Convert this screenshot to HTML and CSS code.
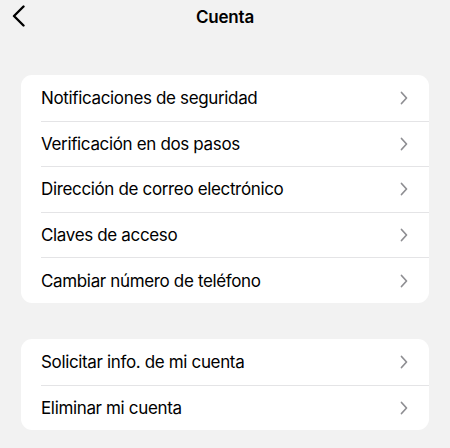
FILE: index.html
```html
<!DOCTYPE html>
<html lang="es">
<head>
    <meta charset="UTF-8">
    <meta name="viewport" content="width=device-width, initial-scale=1.0">
    <title>Cuenta</title>
    <link rel="stylesheet" href="styles.css">
</head>
<body>

    <header class="topbar">
        <a class="back" href="#">
            <svg width="14" height="22" viewBox="0 0 14 22">
                <path d="M11.5 1.5 L2 11 L11.5 20.5" fill="none" stroke="#000" stroke-width="2.4" stroke-linecap="round" stroke-linejoin="round"/>
            </svg>
        </a>
        <h1>Cuenta</h1>
    </header>

    <ul class="group">
        <li><span>Notificaciones de seguridad</span><svg class="chev" viewBox="0 0 8 14"><path d="M1.5 1.5 L6.5 7 L1.5 12.5"/></svg></li>
        <li><span>Verificación en dos pasos</span><svg class="chev" viewBox="0 0 8 14"><path d="M1.5 1.5 L6.5 7 L1.5 12.5"/></svg></li>
        <li><span>Dirección de correo electrónico</span><svg class="chev" viewBox="0 0 8 14"><path d="M1.5 1.5 L6.5 7 L1.5 12.5"/></svg></li>
        <li><span>Claves de acceso</span><svg class="chev" viewBox="0 0 8 14"><path d="M1.5 1.5 L6.5 7 L1.5 12.5"/></svg></li>
        <li><span>Cambiar número de teléfono</span><svg class="chev" viewBox="0 0 8 14"><path d="M1.5 1.5 L6.5 7 L1.5 12.5"/></svg></li>
    </ul>

    <ul class="group">
        <li><span>Solicitar info. de mi cuenta</span><svg class="chev" viewBox="0 0 8 14"><path d="M1.5 1.5 L6.5 7 L1.5 12.5"/></svg></li>
        <li><span>Eliminar mi cuenta</span><svg class="chev" viewBox="0 0 8 14"><path d="M1.5 1.5 L6.5 7 L1.5 12.5"/></svg></li>
    </ul>

</body>
</html>
```

FILE: styles.css
```css
body {
    margin: 0;
    background: #f2f2f2;
    font-family: Inter, "Noto Sans", sans-serif;
    color: #000;
}

.topbar {
    position: relative;
    height: 34px;
    display: flex;
    justify-content: center;
    align-items: center;
}

.topbar h1 {
    margin: 0;
    font-size: 17px;
    font-weight: 600;
    letter-spacing: -0.2px;
}

.back {
    position: absolute;
    left: 12px;
    top: 5px;
    display: flex;
}

.group {
    list-style: none;
    margin: 41px 21px 0;
    padding: 0 0 0 20px;
    background: #fff;
    border-radius: 11px;
}

.group + .group {
    margin-top: 36px;
}

.group li {
    height: 45.6px;
    display: flex;
    align-items: center;
    justify-content: space-between;
    padding-right: 21px;
    font-size: 17px;
    letter-spacing: -0.35px;
    border-top: 1px solid #e4e4e6;
    box-sizing: border-box;
}

.group li:first-child {
    border-top: none;
}

.chev {
    width: 8px;
    height: 14px;
    fill: none;
    stroke: #8e8e92;
    stroke-width: 1.7;
    stroke-linecap: round;
    stroke-linejoin: round;
}
```
